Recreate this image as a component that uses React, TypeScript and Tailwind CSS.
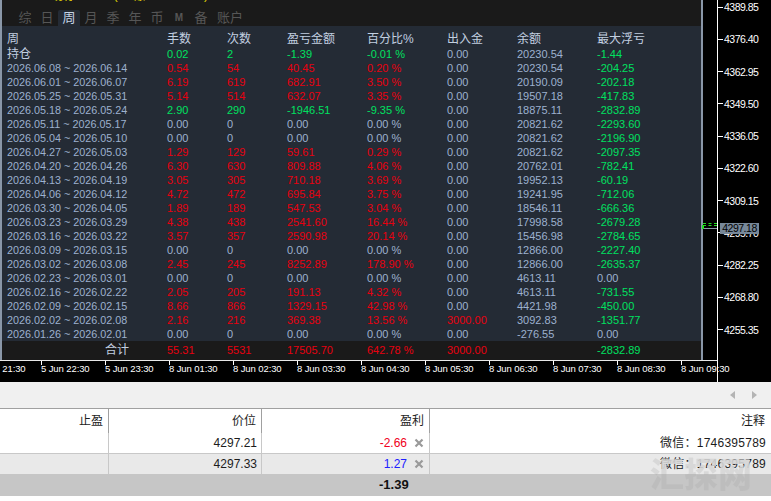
const FONT = "font-['Liberation_Sans','Noto_Sans_CJK_SC',sans-serif]";

type Row = [string, string, string, string, string, string, string, string];

const rows: Row[] = [
  ["2026.06.08 ~ 2026.06.14", "0.54", "54", "40.45", "0.20 %", "0.00", "20230.54", "-204.25"],
  ["2026.06.01 ~ 2026.06.07", "6.19", "619", "682.91", "3.50 %", "0.00", "20190.09", "-202.18"],
  ["2026.05.25 ~ 2026.05.31", "5.14", "514", "632.07", "3.35 %", "0.00", "19507.18", "-417.83"],
  ["2026.05.18 ~ 2026.05.24", "2.90", "290", "-1946.51", "-9.35 %", "0.00", "18875.11", "-2832.89"],
  ["2026.05.11 ~ 2026.05.17", "0.00", "0", "0.00", "0.00 %", "0.00", "20821.62", "-2293.60"],
  ["2026.05.04 ~ 2026.05.10", "0.00", "0", "0.00", "0.00 %", "0.00", "20821.62", "-2196.90"],
  ["2026.04.27 ~ 2026.05.03", "1.29", "129", "59.61", "0.29 %", "0.00", "20821.62", "-2097.35"],
  ["2026.04.20 ~ 2026.04.26", "6.30", "630", "809.88", "4.06 %", "0.00", "20762.01", "-782.41"],
  ["2026.04.13 ~ 2026.04.19", "3.05", "305", "710.18", "3.69 %", "0.00", "19952.13", "-60.19"],
  ["2026.04.06 ~ 2026.04.12", "4.72", "472", "695.84", "3.75 %", "0.00", "19241.95", "-712.06"],
  ["2026.03.30 ~ 2026.04.05", "1.89", "189", "547.53", "3.04 %", "0.00", "18546.11", "-666.36"],
  ["2026.03.23 ~ 2026.03.29", "4.38", "438", "2541.60", "16.44 %", "0.00", "17998.58", "-2679.28"],
  ["2026.03.16 ~ 2026.03.22", "3.57", "357", "2590.98", "20.14 %", "0.00", "15456.98", "-2784.65"],
  ["2026.03.09 ~ 2026.03.15", "0.00", "0", "0.00", "0.00 %", "0.00", "12866.00", "-2227.40"],
  ["2026.03.02 ~ 2026.03.08", "2.45", "245", "8252.89", "178.90 %", "0.00", "12866.00", "-2635.37"],
  ["2026.02.23 ~ 2026.03.01", "0.00", "0", "0.00", "0.00 %", "0.00", "4613.11", "0.00"],
  ["2026.02.16 ~ 2026.02.22", "2.05", "205", "191.13", "4.32 %", "0.00", "4613.11", "-731.55"],
  ["2026.02.09 ~ 2026.02.15", "8.66", "866", "1329.15", "42.98 %", "0.00", "4421.98", "-450.00"],
  ["2026.02.02 ~ 2026.02.08", "2.16", "216", "369.38", "13.56 %", "3000.00", "3092.83", "-1351.77"],
  ["2026.01.26 ~ 2026.02.01", "0.00", "0", "0.00", "0.00 %", "0.00", "-276.55", "0.00"],
];

const tabs = ["综", "日", "周", "月", "季", "年", "币", "M", "备"];
const prices = ["4389.85", "4376.40", "4362.95", "4349.50", "4336.05", "4322.60", "4309.15", "4295.70", "4282.25", "4268.80", "4255.35"];
const times = ["5 Jun 21:30", "5 Jun 22:30", "5 Jun 23:30", "8 Jun 01:30", "8 Jun 02:30", "8 Jun 03:30", "8 Jun 04:30", "8 Jun 05:30", "8 Jun 06:30", "8 Jun 07:30", "8 Jun 08:30", "8 Jun 09:30"];

const GRID = "grid grid-cols-[160px_60px_60px_80px_80px_70px_80px_1fr]";
const GREY = "text-[#9db1cf]";
const RED = "text-[#e8000f]";
const GREEN = "text-[#00e060]";

// zero is grey, positive red, negative green
function tone(v: string) {
  const n = parseFloat(v);
  if (n === 0) return GREY;
  return n > 0 ? RED : GREEN;
}

function StatRow({ row }: { row: Row }) {
  // lots and count follow the sign of the week's profit
  const profit = tone(row[3]);
  return (
    <div className={`${GRID} h-[14px] items-center text-[11px] leading-[14px] whitespace-nowrap`}>
      <span className={`${GREY} text-[10.8px]`}>{row[0]}</span>
      <span className={profit}>{row[1]}</span>
      <span className={profit}>{row[2]}</span>
      <span className={profit}>{row[3]}</span>
      <span className={tone(row[4])}>{row[4]}</span>
      <span className={tone(row[5])}>{row[5]}</span>
      <span className={GREY}>{row[6]}</span>
      <span className={tone(row[7])}>{row[7]}</span>
    </div>
  );
}

function CloseIcon() {
  return (
    <svg width="10" height="10" viewBox="0 0 10 10" className="shrink-0">
      <path d="M1.5 1.5 8.5 8.5M8.5 1.5 1.5 8.5" stroke="#9a9a9a" strokeWidth="2.2" />
    </svg>
  );
}

export default function App() {
  return (
    <div className={`${FONT} relative w-[771px] h-[501px] overflow-hidden bg-white`}>
      {/* Chart */}
      <div className="relative flex h-[382px] bg-black text-white">
        <div className="w-[717px] shrink-0">
          <div className="h-[361px] pr-[14px] border-b border-[#e8e8e8]">
            {/* Stats panel */}
            <div className="flex h-[360px] flex-col border-x-2 border-b-2 border-[#8a97a8] bg-[#242b35]">
              <div className="h-[26px] shrink-0 bg-[#1a1a1a]">
                <div className="h-[3px] overflow-hidden">
                  <div className="-mt-[9px] flex pl-[46px] text-[11px] leading-[11px] text-[#f4e000]">
                    <span className="w-[66px]">·现有·</span>
                    <span className="w-[20px]">(</span>
                    <span className="w-[70px]">账</span>
                    <span>)</span>
                  </div>
                </div>
                <div className="mt-[7px] flex h-[16px] pl-[12px] text-[13px] leading-[16px] text-[#565656]">
                  {tabs.map((t) => (
                    <span
                      key={t}
                      className={`w-[22px] text-center ${t === "周" ? "rounded-t-[2px] bg-[#242b35] text-[#c5d3e6]" : ""} ${t === "M" ? "text-[10px] font-bold" : ""}`}
                    >
                      {t}
                    </span>
                  ))}
                  <span className="ml-[5px]">账户</span>
                </div>
              </div>
              <div className="flex-1 pl-[5px] pt-[5px]">
                <div className={`${GRID} h-[16px] text-[12px] leading-[16px] text-[#c2cfe0]`}>
                  <span>周</span>
                  <span>手数</span>
                  <span>次数</span>
                  <span>盈亏金额</span>
                  <span>百分比%</span>
                  <span>出入金</span>
                  <span>余额</span>
                  <span>最大浮亏</span>
                </div>
                <div className={`${GRID} h-[14px] items-center text-[11px] leading-[14px]`}>
                  <span className="text-[12px] text-[#c2cfe0]">持仓</span>
                  <span className={GREEN}>0.02</span>
                  <span className={GREEN}>2</span>
                  <span className={GREEN}>-1.39</span>
                  <span className={GREEN}>-0.01 %</span>
                  <span className={GREY}>0.00</span>
                  <span className={GREY}>20230.54</span>
                  <span className={GREEN}>-1.44</span>
                </div>
                {rows.map((r) => (
                  <StatRow key={r[0]} row={r} />
                ))}
              </div>
              <div className={`${GRID} h-[19px] shrink-0 items-center bg-[#1a1a1a] pl-[5px] text-[11px] leading-[19px]`}>
                <span className="pr-[38px] text-right text-[12px] text-[#c2cfe0]">合计</span>
                <span className={RED}>55.31</span>
                <span className={RED}>5531</span>
                <span className={RED}>17505.70</span>
                <span className={RED}>642.78 %</span>
                <span className={RED}>3000.00</span>
                <span />
                <span className={GREEN}>-2832.89</span>
              </div>
            </div>
          </div>
          {/* Time axis */}
          <div className="flex h-[21px] ml-[-23px] text-[9.5px] leading-[14px] tracking-[-0.1px]">
            {times.map((t) => (
              <div key={t} className="h-[4px] w-[64px] shrink-0 border-l border-white whitespace-nowrap">
                <span className="block pt-[1px] -ml-px">{t}</span>
              </div>
            ))}
          </div>
        </div>

        {/* Price axis */}
        <div className="relative flex-1 border-l border-white text-[10.5px] leading-[12px] tracking-[-0.5px]">
          <div className="-mt-[9px]">
            {prices.map((p) => (
              <div key={p} className="flex h-[32.25px] items-center">
                <span className="mr-px h-px w-[5px] bg-white" />
                <span>{p}</span>
              </div>
            ))}
          </div>
        </div>

        {/* Current price markers */}
        <div className="absolute left-[703px] top-[223px] h-0 w-[14px] border-t border-dashed border-[#22dd22]" />
        <div className="absolute left-[703px] top-[225px] h-0 w-[14px] border-t border-dashed border-[#22dd22]" />
        <div className="absolute left-[703px] top-[228px] h-px w-[14px] bg-[#8a97a8]" />
        <div className="absolute left-[702px] top-[225px] h-[4px] w-[2px] bg-[#22dd22]" />
        <div className="absolute left-[720px] top-[223px] h-[11px] w-[39px] bg-[#778899] text-center text-[10.5px] leading-[11px] tracking-[-0.5px] text-black">
          4297.18
        </div>
      </div>

      {/* Toolbar */}
      <div className="flex h-[26px] items-center justify-end gap-[17px] bg-[#f0f0f0] pr-[14px]">
        <span className="h-0 w-0 border-y-[4px] border-r-[5px] border-y-transparent border-r-[#b4b4b4]" />
        <span className="h-0 w-0 border-y-[4px] border-l-[5px] border-y-transparent border-l-[#b4b4b4]" />
      </div>

      {/* Trade table */}
      <div className="grid grid-cols-[109px_153px_168px_1fr] border-t border-[#a0a0a0] text-[12px] text-[#1c1c1c]">
        <div className="flex h-[24px] items-center justify-end border-r border-[#a0a0a0] pr-[5px]">止盈</div>
        <div className="flex h-[24px] items-center justify-end border-r border-[#a0a0a0] pr-[5px]">价位</div>
        <div className="flex h-[24px] items-center justify-end border-r border-[#a0a0a0] pr-[5px]">盈利</div>
        <div className="flex h-[24px] items-center justify-end pr-[6px]">注释</div>

        <div className="h-[21px] border-r border-b border-[#c8c8c8]" />
        <div className="flex h-[21px] items-center justify-end border-r border-b border-[#c8c8c8] pr-[4px]">4297.21</div>
        <div className="flex h-[21px] items-center justify-end gap-[7px] border-r border-b border-[#c8c8c8] pr-[5px] text-[#f00020]">
          -2.66
          <CloseIcon />
        </div>
        <div className="flex h-[21px] items-center justify-end border-b border-[#c8c8c8] pr-[5px] tracking-[0.25px]">微信：1746395789</div>

        <div className="h-[20px] border-r border-[#c8c8c8] bg-[#e9e9e9]" />
        <div className="flex h-[20px] items-center justify-end border-r border-[#c8c8c8] bg-[#e9e9e9] pr-[4px]">4297.33</div>
        <div className="flex h-[20px] items-center justify-end gap-[7px] border-r border-[#c8c8c8] bg-[#e9e9e9] pr-[5px] text-[#2020ff]">
          1.27
          <CloseIcon />
        </div>
        <div className="flex h-[20px] items-center justify-end bg-[#e9e9e9] pr-[5px] tracking-[0.25px]">微信：1746395789</div>
      </div>
      <div className="flex h-[22px] items-center bg-[#c6c6c6] pl-[379px] text-[13px] font-bold text-[#111]">-1.39</div>

      {/* Watermark, lighter over the grey row and darker over the total row */}
      <div className="absolute left-[650px] top-[455px] bg-[linear-gradient(#d6d6d6e6_47.5%,#bdbdbd_47.5%)] bg-clip-text text-[34px] font-black leading-[40px] text-transparent">
        汇探网
      </div>
    </div>
  );
}
